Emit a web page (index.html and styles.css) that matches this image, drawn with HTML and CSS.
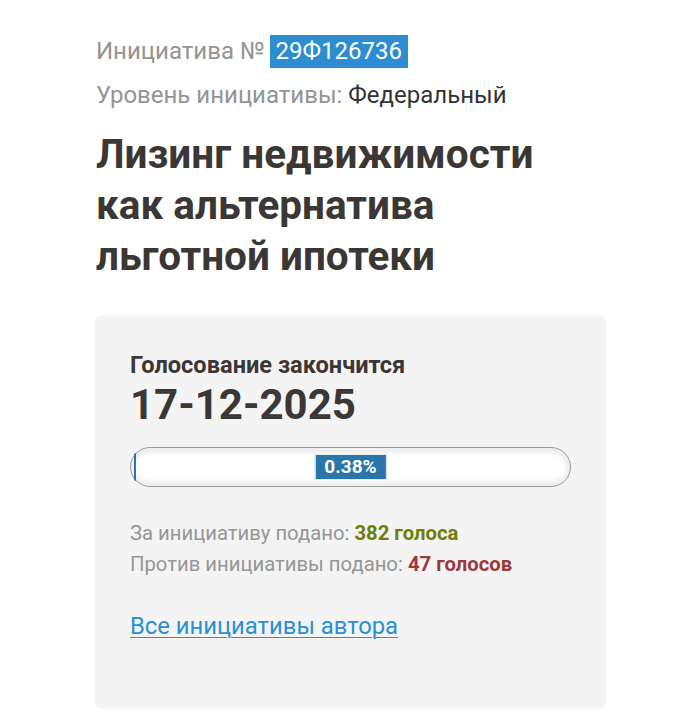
FILE: index.html
```html
<!DOCTYPE html>
<html lang="ru">
<head>
<meta charset="utf-8">
<link rel="stylesheet" href="styles.css">
</head>
<body>
<div class="page">
  <div class="meta-line">
    <span class="muted">Инициатива №</span>
    <span class="badge">29Ф126736</span>
  </div>
  <div class="meta-line level">
    <span class="muted">Уровень инициативы:</span> <span class="dark">Федеральный</span>
  </div>
  <h1 class="title">Лизинг недвижимости как альтернатива льготной ипотеки</h1>
  <div class="card">
    <div class="ends-label">Голосование закончится</div>
    <div class="ends-date">17-12-2025</div>
    <div class="progress">
      <div class="progress-fill" style="width:0.38%"></div>
      <span class="progress-label">0.38%</span>
    </div>
    <div class="votes">
      <div class="vote-row">За инициативу подано: <b class="yes">382 голоса</b></div>
      <div class="vote-row">Против инициативы подано: <b class="no">47 голосов</b></div>
    </div>
    <a class="author-link" href="#">Все инициативы автора</a>
  </div>
</div>
</body>
</html>
```

FILE: styles.css
```css
html, body {
  margin: 0;
  padding: 0;
  background: #ffffff;
}
body {
  font-family: Roboto, "Liberation Sans", sans-serif;
  color: #3b3735;
}
.page {
  padding: 35px 94px 0 96px;
}
.meta-line {
  font-size: 24px;
  line-height: 33px;
  display: flex;
  align-items: center;
  gap: 5px;
}
.level {
  margin-top: 14px;
  display: block;
  line-height: 26px;
}
.muted {
  color: #949494;
}
.dark {
  color: #333333;
}
.badge {
  background: #2c8dd0;
  color: #ffffff;
  padding: 0 6px;
  height: 33px;
  line-height: 33px;
}
.title {
  margin: 21px 0 0 0;
  font-size: 40.5px;
  line-height: 51px;
  font-weight: 700;
  color: #3b3735;
  width: 470px;
}
.card {
  margin: 33px 0 0 -1px;
  width: 511px;
  height: 394px;
  box-sizing: border-box;
  background: #f4f4f4;
  border-radius: 7px;
  padding: 36px 35px 0 35px;
}
.ends-label {
  font-size: 23.6px;
  font-weight: 700;
  line-height: 28px;
  color: #3b3735;
}
.ends-date {
  font-size: 42px;
  font-weight: 700;
  line-height: 50px;
  color: #3b3735;
  margin-top: 1px;
}
.progress {
  position: relative;
  margin-top: 17px;
  width: 441px;
  height: 40px;
  box-sizing: border-box;
  border: 1px solid #9a9a9a;
  border-radius: 20px;
  background: #ffffff;
  box-shadow: inset 0 0 0 2px #f0f0f0, inset 0 3px 6px rgba(0,0,0,0.12), inset 0 -3px 6px rgba(0,0,0,0.10);
  padding: 5px 3px;
}
.progress-fill {
  height: 100%;
  min-width: 2px;
  background: #2a77ad;
  border-radius: 2px 0 0 2px;
}
.progress-label {
  position: absolute;
  left: 50%;
  top: 6px;
  transform: translateX(-50%);
  background: #2a76aa;
  color: #ffffff;
  font-size: 19px;
  font-weight: 700;
  line-height: 24px;
  padding: 0 9px;
  border: 1px solid #e8e8e8;
}
.votes {
  margin-top: 31px;
  font-size: 20.3px;
  line-height: 31px;
  color: #969696;
}
.vote-row b {
  font-weight: 700;
}
.yes {
  color: #6e7d0c;
}
.no {
  color: #9a3b3b;
}
.author-link {
  display: inline-block;
  margin-top: 32px;
  font-size: 23.8px;
  line-height: 28px;
  color: #2b8fd6;
  text-decoration: underline;
  text-underline-offset: 3px;
  text-decoration-thickness: 1px;
}
```
